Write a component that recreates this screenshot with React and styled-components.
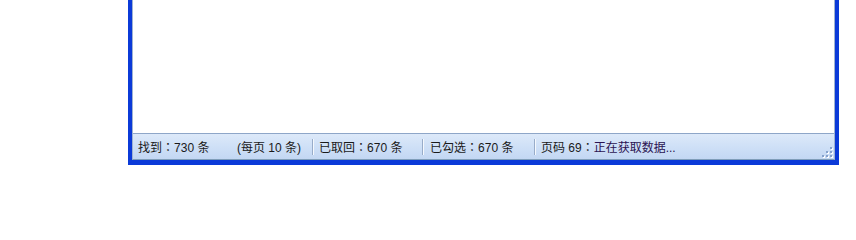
import styled, { createGlobalStyle } from "styled-components";

const GlobalStyle = createGlobalStyle`
  html, body {
    margin: 0;
    padding: 0;
    background: #ffffff;
  }
  body {
    font-family: Tahoma, "Liberation Sans", "Noto Sans CJK SC", sans-serif;
  }
`;

const Page = styled.div`
  width: 856px;
  height: 226px;
  padding-left: 128px;
  box-sizing: border-box;
`;

const Frame = styled.div`
  width: 711px;
  box-sizing: border-box;
  border: 5px solid #0b3ad8;
  border-top: none;
  border-right-width: 4px;
  box-shadow: inset 2px 0 0 #1f5fe6, inset -1px 0 0 #1f5fe6, inset 0 -2px 0 #1f5fe6;
  background: #0b3ad8;
`;

const Inner = styled.div`
  border-left: 1px solid #9fb3d1;
  border-right: 1px solid #9fb3d1;
  border-bottom: 1px solid #7f9db9;
  margin: 0 0 0 -1px;
  background: #ffffff;
`;

const Content = styled.div`
  height: 133px;
  background: #ffffff;
`;

const StatusBar = styled.div`
  position: relative;
  display: flex;
  align-items: center;
  height: 25px;
  border-top: 1px solid #8ea6c8;
  background: linear-gradient(to bottom, #dde9f9 0%, #d0e1f7 45%, #c3d7f3 100%);
  font-size: 12px;
  color: #1a1a1a;
  white-space: nowrap;
`;

const Panel = styled.div`
  display: flex;
  align-items: center;
  width: ${(p) => p.$width}px;
  padding-left: ${(p) => p.$pad}px;
  box-sizing: border-box;
  flex: ${(p) => (p.$width ? "none" : "1")};
`;

const Cell = styled.span`
  display: inline-block;
  width: ${(p) => (p.$width ? `${p.$width}px` : "auto")};
  color: ${(p) => p.$color || "inherit"};
`;

// full-width colon, centred in its box as the original font draws it
const Colon = styled.span`
  font-family: "Noto Sans CJK TC", "Noto Sans CJK SC", sans-serif;
`;

const Separator = styled.div`
  flex: none;
  width: 1px;
  height: 16px;
  background: #98acc9;
  border-right: 1px solid #f4f8fd;
`;

const Grip = styled.svg`
  position: absolute;
  right: 1px;
  bottom: 1px;
`;

function ResizeGrip() {
  const dots = [
    [8, 0],
    [4, 4],
    [8, 4],
    [0, 8],
    [4, 8],
    [8, 8],
  ];
  return (
    <Grip width="11" height="11" viewBox="0 0 11 11">
      {dots.map(([x, y]) => (
        <g key={`${x}-${y}`}>
          <rect x={x + 1} y={y + 1} width="2" height="2" fill="#ffffff" />
          <rect x={x} y={y} width="2" height="2" fill="#86a2cc" />
        </g>
      ))}
    </Grip>
  );
}

export default function App() {
  return (
    <>
      <GlobalStyle />
      <Page>
        <Frame>
          <Inner>
            <Content />
            <StatusBar>
              <Panel $width={179} $pad={5}>
                <Cell $width={99}>
                  找到<Colon>：</Colon>730 条
                </Cell>
                <Cell>(每页 10 条)</Cell>
              </Panel>
              <Separator />
              <Panel $width={108} $pad={5}>
                已取回<Colon>：</Colon>670 条
              </Panel>
              <Separator />
              <Panel $width={110} $pad={6}>
                已勾选<Colon>：</Colon>670 条
              </Panel>
              <Separator />
              <Panel $pad={5}>
                页码 69<Colon>：</Colon>
                <Cell $color="#2b1452">正在获取数据...</Cell>
              </Panel>
              <ResizeGrip />
            </StatusBar>
          </Inner>
        </Frame>
      </Page>
    </>
  );
}
